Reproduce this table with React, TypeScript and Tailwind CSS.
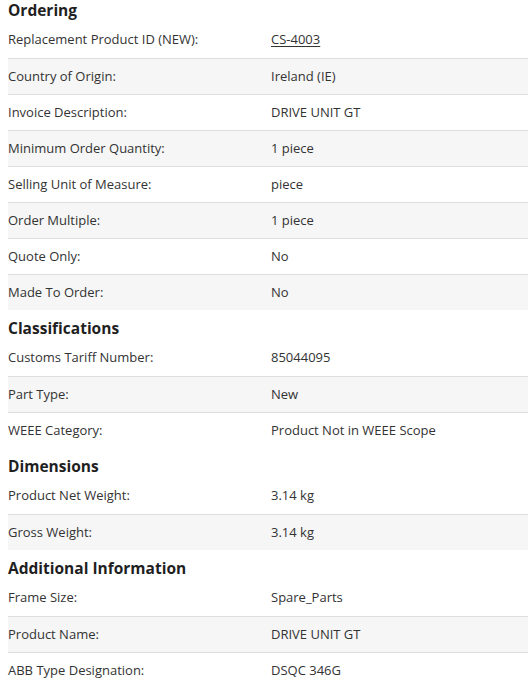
const sections: { title: string; rows: [string, string][] }[] = [
  {
    title: 'Ordering',
    rows: [
      ['Replacement Product ID (NEW):', 'CS-4003'],
      ['Country of Origin:', 'Ireland (IE)'],
      ['Invoice Description:', 'DRIVE UNIT GT'],
      ['Minimum Order Quantity:', '1 piece'],
      ['Selling Unit of Measure:', 'piece'],
      ['Order Multiple:', '1 piece'],
      ['Quote Only:', 'No'],
      ['Made To Order:', 'No'],
    ],
  },
  {
    title: 'Classifications',
    rows: [
      ['Customs Tariff Number:', '85044095'],
      ['Part Type:', 'New'],
      ['WEEE Category:', 'Product Not in WEEE Scope'],
    ],
  },
  {
    title: 'Dimensions',
    rows: [
      ['Product Net Weight:', '3.14 kg'],
      ['Gross Weight:', '3.14 kg'],
    ],
  },
  {
    title: 'Additional Information',
    rows: [
      ['Frame Size:', 'Spare_Parts'],
      ['Product Name:', 'DRIVE UNIT GT'],
      ['ABB Type Designation:', 'DSQC 346G'],
    ],
  },
];

export default function App() {
  return (
    <div className="min-h-screen bg-white pl-2 font-['Open_Sans',sans-serif] text-[13px] text-[#333]">
      {sections.map((section, si) => (
        <section key={section.title}>
          <h2
            className={`${si === 0 ? 'pt-0' : 'pt-2'} pb-[2px] text-[15.5px] font-bold leading-5 text-[#1f1f1f]`}
          >
            {section.title}
          </h2>
          {section.rows.map(([label, value], ri) => (
            <div
              key={label}
              className={`grid h-9 grid-cols-[263px_1fr] items-center ${
                ri > 0 ? 'border-t border-[#dedede]' : ''
              } ${ri % 2 === 1 ? 'bg-[#f6f6f6]' : 'bg-white'}`}
            >
              <div>{label}</div>
              <div className={label.startsWith('Replacement') ? 'underline underline-offset-2' : ''}>
                {value}
              </div>
            </div>
          ))}
        </section>
      ))}
    </div>
  );
}
